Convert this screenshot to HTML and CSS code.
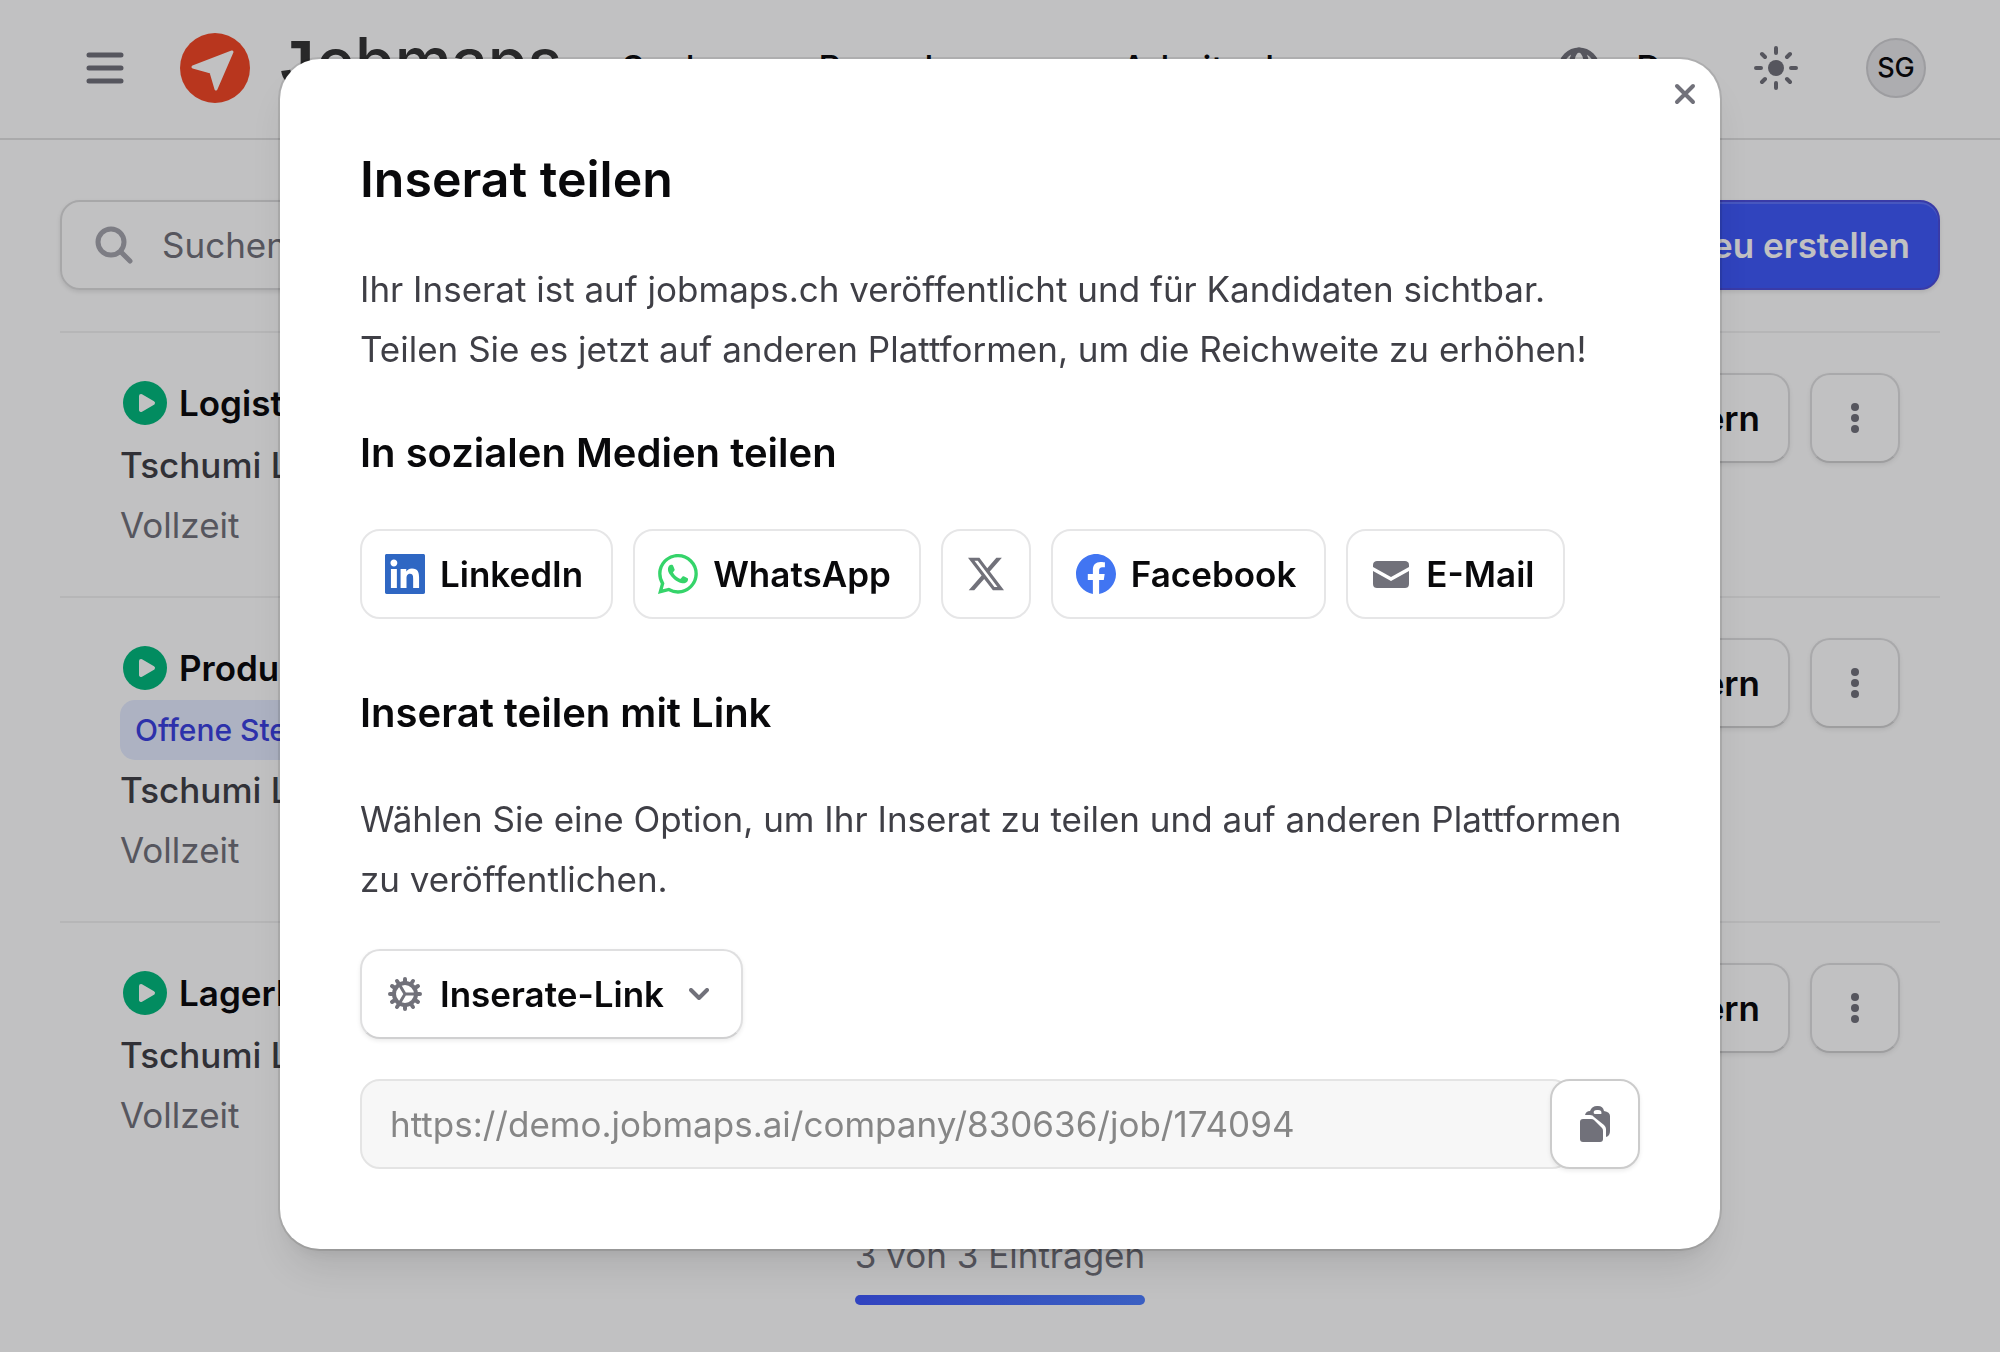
FILE: index.html
```html
<!DOCTYPE html>
<html lang="de">
<head>
    <meta charset="UTF-8">
    <meta name="viewport" content="width=device-width, initial-scale=1.0">
    <title>Inserat teilen | Jobmaps</title>
    <link rel="stylesheet" href="styles.css">
</head>

<body>
    <!-- Icons used more than once -->
    <svg class="sprite" aria-hidden="true">
        <symbol id="play" viewBox="0 0 44 44">
            <circle cx="22" cy="22" r="22" fill="#00b97c"/>
            <path d="M18 15l12 7-12 7z" fill="#fff" stroke="#fff" stroke-width="4" stroke-linejoin="round"/>
        </symbol>
        <symbol id="dots" viewBox="0 0 8 32">
            <circle cx="4" cy="5" r="4" fill="currentColor"/>
            <circle cx="4" cy="16" r="4" fill="currentColor"/>
            <circle cx="4" cy="27" r="4" fill="currentColor"/>
        </symbol>
    </svg>

    <header class="header">
        <button class="icon-button menu-button" type="button" aria-label="Menü">
            <svg width="38" height="34" viewBox="0 0 38 34" fill="none" stroke="currentColor" stroke-width="5" stroke-linecap="round">
                <path d="M3 4h32M3 17h32M3 30h32"/>
            </svg>
        </button>
        <a class="logo" href="#">
            <svg width="70" height="70" viewBox="0 0 70 70">
                <circle cx="35" cy="35" r="35" fill="#f34625"/>
                <path d="M52 19L36 56 31 39 13 34z" fill="#fff" stroke="#fff" stroke-width="3" stroke-linejoin="round"/>
            </svg>
            <span class="logo-text"><span class="logo-initial">J</span>obmaps</span>
        </a>
        <nav class="nav">
            <a href="#">Suchen</a>
            <a href="#">Bewerbungen</a>
            <a href="#">Arbeitgeber</a>
        </nav>
        <div class="header-tools">
            <button class="language" type="button">
                <svg width="42" height="42" viewBox="0 0 42 42" fill="none" stroke="currentColor" stroke-width="5">
                    <circle cx="21" cy="21" r="18"/>
                    <ellipse cx="21" cy="21" rx="8" ry="18"/>
                    <path d="M3 21h36"/>
                </svg>
                De
            </button>
            <button class="icon-button" type="button" aria-label="Farbschema">
                <svg width="44" height="44" viewBox="0 0 44 44" stroke="currentColor" stroke-width="4" stroke-linecap="round">
                    <circle cx="22" cy="22" r="8" fill="currentColor" stroke="none"/>
                    <path d="M22 2v5M22 37v5M2 22h5M37 22h5M8 8l3 3M33 33l3 3M8 36l3-3M33 11l3-3"/>
                </svg>
            </button>
            <button class="avatar" type="button">SG</button>
        </div>
    </header>

    <main class="main">
        <div class="toolbar">
            <label class="search">
                <svg width="40" height="40" viewBox="0 0 40 40" fill="none" stroke="currentColor" stroke-width="5" stroke-linecap="round">
                    <circle cx="17" cy="17" r="13"/>
                    <path d="M27 27l9 9"/>
                </svg>
                <input type="search" placeholder="Suchen" aria-label="Suchen">
            </label>
            <button class="button primary" type="button">Neu erstellen</button>
        </div>

        <ul class="jobs">
            <li class="job">
                <div class="job-info">
                    <h2><svg width="44" height="44"><use href="#play"/></svg>Logistiker</h2>
                    <p class="company">Tschumi Logistik</p>
                    <p class="workload">Vollzeit</p>
                </div>
                <div class="job-actions">
                    <button class="button" type="button">Ändern</button>
                    <button class="button square" type="button" aria-label="Mehr"><svg width="8" height="32"><use href="#dots"/></svg></button>
                </div>
            </li>
            <li class="job">
                <div class="job-info">
                    <h2><svg width="44" height="44"><use href="#play"/></svg>Produktion</h2>
                    <span class="badge">Offene Stelle</span>
                    <p class="company">Tschumi Logistik</p>
                    <p class="workload">Vollzeit</p>
                </div>
                <div class="job-actions">
                    <button class="button" type="button">Ändern</button>
                    <button class="button square" type="button" aria-label="Mehr"><svg width="8" height="32"><use href="#dots"/></svg></button>
                </div>
            </li>
            <li class="job">
                <div class="job-info">
                    <h2><svg width="44" height="44"><use href="#play"/></svg>Lagerlogistik</h2>
                    <p class="company">Tschumi Logistik</p>
                    <p class="workload">Vollzeit</p>
                </div>
                <div class="job-actions">
                    <button class="button" type="button">Ändern</button>
                    <button class="button square" type="button" aria-label="Mehr"><svg width="8" height="32"><use href="#dots"/></svg></button>
                </div>
            </li>
        </ul>

        <div class="count">3 von 3 Einträgen</div>
    </main>

    <div class="backdrop">
        <section class="modal" role="dialog" aria-modal="true" aria-labelledby="modal-title">
            <button class="icon-button close" type="button" aria-label="Schliessen">
                <svg width="22" height="22" viewBox="0 0 22 22" stroke="currentColor" stroke-width="4" stroke-linecap="round">
                    <path d="M3 3l16 16M19 3L3 19"/>
                </svg>
            </button>

            <h1 id="modal-title">Inserat teilen</h1>
            <p class="intro">Ihr Inserat ist auf jobmaps.ch veröffentlicht und für Kandidaten sichtbar. Teilen Sie es jetzt auf anderen Plattformen, um die Reichweite zu erhöhen!</p>

            <h3>In sozialen Medien teilen</h3>
            <div class="share">
                <button class="button flat" type="button">
                    <svg width="40" height="40" viewBox="0 0 24 24" fill="#2f67c3">
                        <path d="M20.447 20.452h-3.554v-5.569c0-1.328-.027-3.037-1.852-3.037-1.853 0-2.136 1.445-2.136 2.939v5.667H9.351V9h3.414v1.561h.046c.477-.9 1.637-1.85 3.37-1.85 3.601 0 4.267 2.37 4.267 5.455v6.286zM5.337 7.433c-1.144 0-2.063-.926-2.063-2.065 0-1.138.92-2.063 2.063-2.063 1.14 0 2.064.925 2.064 2.063 0 1.139-.925 2.065-2.064 2.065zm1.782 13.019H3.555V9h3.564v11.452zM23 0H1C.4 0 0 .4 0 1v22c0 .6.4 1 1 1h22c.6 0 1-.4 1-1V1c0-.6-.4-1-1-1z"/>
                    </svg>
                    LinkedIn
                </button>
                <button class="button flat" type="button">
                    <svg width="40" height="40" viewBox="0 0 16 16" fill="#35d46a">
                        <path d="M13.601 2.326A7.85 7.85 0 0 0 7.994 0C3.627 0 .068 3.558.064 7.926c0 1.399.366 2.76 1.057 3.965L0 16l4.204-1.102a7.9 7.9 0 0 0 3.79.965h.004c4.368 0 7.926-3.558 7.93-7.93A7.9 7.9 0 0 0 13.6 2.326zM7.994 14.521a6.6 6.6 0 0 1-3.356-.92l-.24-.144-2.494.654.666-2.433-.156-.251a6.56 6.56 0 0 1-1.007-3.505c0-3.626 2.957-6.584 6.591-6.584a6.56 6.56 0 0 1 4.66 1.931 6.56 6.56 0 0 1 1.928 4.66c-.004 3.639-2.961 6.592-6.592 6.592m3.615-4.934c-.197-.099-1.17-.578-1.353-.646-.182-.065-.315-.099-.445.099-.133.197-.513.646-.627.775-.114.133-.232.148-.43.05-.197-.1-.836-.308-1.592-.985-.59-.525-.985-1.175-1.103-1.372-.114-.198-.011-.304.088-.403.087-.088.197-.232.296-.346.1-.114.133-.198.198-.33.065-.134.034-.248-.015-.347-.05-.099-.445-1.076-.612-1.47-.16-.389-.323-.335-.445-.34-.114-.007-.247-.007-.38-.007a.73.73 0 0 0-.529.247c-.182.198-.691.677-.691 1.654s.71 1.916.81 2.049c.098.133 1.394 2.132 3.383 2.992.47.205.84.326 1.129.418.475.152.904.129 1.246.08.38-.058 1.171-.48 1.338-.943.164-.464.164-.86.114-.943-.049-.084-.182-.133-.38-.232"/>
                    </svg>
                    WhatsApp
                </button>
                <button class="button flat square" type="button" aria-label="X">
                    <svg width="36" height="36" viewBox="0 0 24 24" fill="currentColor">
                        <path d="M18.901 1.153h3.68l-8.04 9.19L24 22.846h-7.406l-5.8-7.584-6.638 7.584H.474l8.6-9.83L0 1.154h7.594l5.243 6.932ZM17.61 20.644h2.039L6.486 3.24H4.298Z"/>
                    </svg>
                </button>
                <button class="button flat" type="button">
                    <svg width="40" height="40" viewBox="0 0 24 24" fill="#4175f2">
                        <path d="M24 12.073c0-6.627-5.373-12-12-12s-12 5.373-12 12c0 5.99 4.388 10.954 10.125 11.854v-8.385H7.078v-3.47h3.047V9.43c0-3.007 1.792-4.669 4.533-4.669 1.312 0 2.686.235 2.686.235v2.953H15.83c-1.491 0-1.956.925-1.956 1.874v2.25h3.328l-.532 3.47h-2.796v8.385C19.612 23.027 24 18.062 24 12.073z"/>
                    </svg>
                    Facebook
                </button>
                <button class="button flat" type="button">
                    <svg width="40" height="40" viewBox="0 0 40 40" fill="currentColor">
                        <path d="M2 13v-2c0-3 2-4 4-4h28c2 0 4 1 4 4v2L20 23z"/>
                        <path d="M2 17l18 10 18-10v13c0 3-2 4-4 4H6c-2 0-4-1-4-4z"/>
                    </svg>
                    E-Mail
                </button>
            </div>

            <h3>Inserat teilen mit Link</h3>
            <p class="link-text">Wählen Sie eine Option, um Ihr Inserat zu teilen und auf anderen Plattformen zu veröffentlichen.</p>

            <label class="button link-type">
                <svg width="40" height="40" viewBox="0 0 40 40" fill="none" stroke="currentColor" stroke-width="4" stroke-linecap="round">
                    <circle cx="20" cy="20" r="11"/>
                    <path d="M20 8V5M26 10l2-3M30 14l3-2M32 20h3M30 26l3 2M26 30l2 3M20 32v3M14 30l-2 3M10 26l-3 2M8 20H5M10 14l-3-2M14 10l-2-3"/>
                    <path d="M20 20h11M20 20l-6-10M20 20l-6 10" stroke-width="3"/>
                </svg>
                <select aria-label="Link-Typ">
                    <option>Inserate-Link</option>
                </select>
                <svg class="chevron" width="20" height="12" viewBox="0 0 20 12" fill="none" stroke="currentColor" stroke-width="4" stroke-linecap="round" stroke-linejoin="round">
                    <path d="M2 2l8 8 8-8"/>
                </svg>
            </label>

            <div class="link-row">
                <input class="link-field" type="text" value="https://demo.jobmaps.ai/company/830636/job/174094" aria-label="Inserate-Link" readonly>
                <button class="button square copy" type="button" aria-label="Kopieren">
                    <svg width="40" height="40" viewBox="0 0 40 40" fill="currentColor">
                        <path d="M5 18q0-3 3-3h8q2 0 3 1l8 8q1 1 1 3v8q0 3-3 3H8q-3 0-3-3z"/>
                        <path fill-rule="evenodd" d="M10 11q1-4 5-4 2-5 7-5h1q5 0 6 5 6 1 6 5v15q0 5-4 6v-8q0-2-2-4L19 13q-1-2-4-2zM19 7q-1 3 1 3h6q1 0 0-3-1-1-3-1h-1q-2 0-3 1z"/>
                    </svg>
                </button>
            </div>
        </section>
    </div>
</body>
</html>
```
FILE: styles.css
```css
* {
    box-sizing: border-box;
}

body {
    font-family: Inter, "Liberation Sans", sans-serif;
    font-size: 35px;
    line-height: 60px;
    color: #09090b;
    background-color: #fff;
    margin: 0 2px 0 0;
    min-height: 100vh;
}

h1, h2, h3, p, ul {
    margin: 0;
    padding: 0;
    font-weight: 600;
}

p {
    font-weight: 400;
}

svg {
    display: block;
    flex-shrink: 0;
}

button, input, select {
    font: inherit;
    color: inherit;
    margin: 0;
    padding: 0;
    border: 0;
    background: none;
}

a {
    color: inherit;
    text-decoration: none;
}

.sprite {
    position: absolute;
    width: 0;
    height: 0;
}

.icon-button {
    color: #71717a;
}

/* Header */

.header {
    display: flex;
    align-items: center;
    height: 140px;
    padding: 0 74px 2px 86px;
    border-bottom: 2px solid #e0e0e1;
}

.logo {
    display: flex;
    align-items: center;
    gap: 28px;
    margin-left: 56px;
}

.logo-text {
    padding-bottom: 8px;
    font-size: 64px;
    font-weight: 500;
    color: #333;
}

.logo-initial {
    font-family: "Liberation Mono", monospace;
    font-weight: 700;
}

.nav {
    display: flex;
    gap: 70px;
    margin-left: 60px;
    font-weight: 500;
}

.header-tools {
    display: flex;
    align-items: center;
    margin-left: auto;
}

.language {
    display: flex;
    align-items: center;
    gap: 36px;
    margin-right: 72px;
    font-weight: 500;
}

.language svg {
    color: #71717a;
}

.avatar {
    width: 60px;
    height: 60px;
    margin-left: 68px;
    border: 2px solid #cfcfd2;
    border-radius: 50%;
    background-color: #e4e4e7;
    font-size: 27px;
    font-weight: 500;
    line-height: 56px;
}

/* Job list */

.main {
    padding: 60px;
}

.toolbar {
    display: flex;
    justify-content: space-between;
    margin-bottom: 41px;
}

.search {
    display: flex;
    align-items: center;
    gap: 28px;
    width: 900px;
    height: 90px;
    padding: 0 32px;
    border: 2px solid #dcdcdd;
    border-radius: 20px;
    box-shadow: 0 2px 4px rgba(9, 9, 11, 0.1);
}

.search svg {
    color: #a5a5ad;
}

.search input {
    flex: 1;
    outline: none;
}

.search input::placeholder {
    color: #71717a;
    opacity: 1;
}

.button {
    display: flex;
    align-items: center;
    justify-content: center;
    gap: 15px;
    height: 90px;
    padding: 0 28px;
    border: 2px solid #dfdfe0;
    border-bottom-color: #d0d0d1;
    border-radius: 20px;
    background-color: #fff;
    box-shadow: 0 2px 4px rgba(9, 9, 11, 0.08);
    font-weight: 600;
    white-space: nowrap;
}

.button svg {
    color: #71717a;
}

.primary {
    border-color: #4a4ddc;
    background-color: #3e58fa;
    box-shadow: inset 0 2px #5c72fb, 0 2px 4px rgba(9, 9, 11, 0.1);
    color: #fff;
}

.square {
    width: 90px;
    padding: 0;
}

.flat {
    padding: 0 28px 0 23px;
    border-color: #e6e6e7;
    box-shadow: none;
}

.flat.square {
    padding: 0;
}

.jobs {
    list-style: none;
}

.job {
    display: flex;
    justify-content: space-between;
    padding: 40px 40px 41px 60px;
    border-top: 2px solid #f0f0f1;
}

.job h2 {
    display: flex;
    align-items: center;
    gap: 12px;
    height: 62px;
    padding: 0 0 2px 3px;
    font-size: 35px;
}

.badge {
    display: block;
    width: max-content;
    padding: 0 15px;
    border-radius: 15px;
    background-color: #e4ebff;
    color: #3a3fe0;
    font-size: 30px;
    font-weight: 500;
}

.company {
    color: #3f3f46;
    font-weight: 500;
}

.workload {
    color: #71717a;
}

.job-actions {
    display: flex;
    gap: 20px;
}

.count {
    width: max-content;
    margin: 39px auto 0;
    color: #71717a;
}

.count::after {
    content: "";
    display: block;
    height: 10px;
    margin-top: 10px;
    border-radius: 5px;
    background: linear-gradient(to right, #3f58fc, #4c7dff);
}

/* Share dialog */

.backdrop {
    position: fixed;
    inset: 0 2px 0 0;
    display: flex;
    align-items: flex-start;
    justify-content: center;
    padding-top: 59px;
    background-color: rgba(9, 9, 11, 0.25);
}

.modal {
    position: relative;
    width: 72%;
    padding: 80px;
    border-radius: 40px;
    background-color: #fff;
    box-shadow: 0 0 0 2px rgba(9, 9, 11, 0.1), 0 25px 38px -8px rgba(0, 0, 0, 0.1), 0 10px 15px -10px rgba(0, 0, 0, 0.1);
}

.close {
    position: absolute;
    top: 24px;
    right: 24px;
}

.modal h1 {
    font-size: 50px;
    line-height: 80px;
}

.modal h3 {
    font-size: 40px;
}

.modal p {
    color: #3f3f46;
}

.intro {
    margin: 40px 0 44px;
}

.share {
    display: flex;
    gap: 20px;
    margin: 46px 0 64px;
}

.link-text {
    margin: 46px 0 40px;
}

.link-type {
    width: max-content;
    padding: 0 32px 0 23px;
    margin-bottom: 40px;
}

.link-type select {
    appearance: none;
    outline: none;
}

.chevron {
    margin-left: 10px;
}

.link-row {
    display: flex;
}

.link-field {
    flex: 1;
    height: 90px;
    margin-right: -22px;
    padding: 0 28px;
    border: 2px solid #e4e4e4;
    border-radius: 20px;
    background-color: #f7f7f7;
    color: #868686;
    outline: none;
}

.copy {
    position: relative;
    border-color: #ccc;
}
```
